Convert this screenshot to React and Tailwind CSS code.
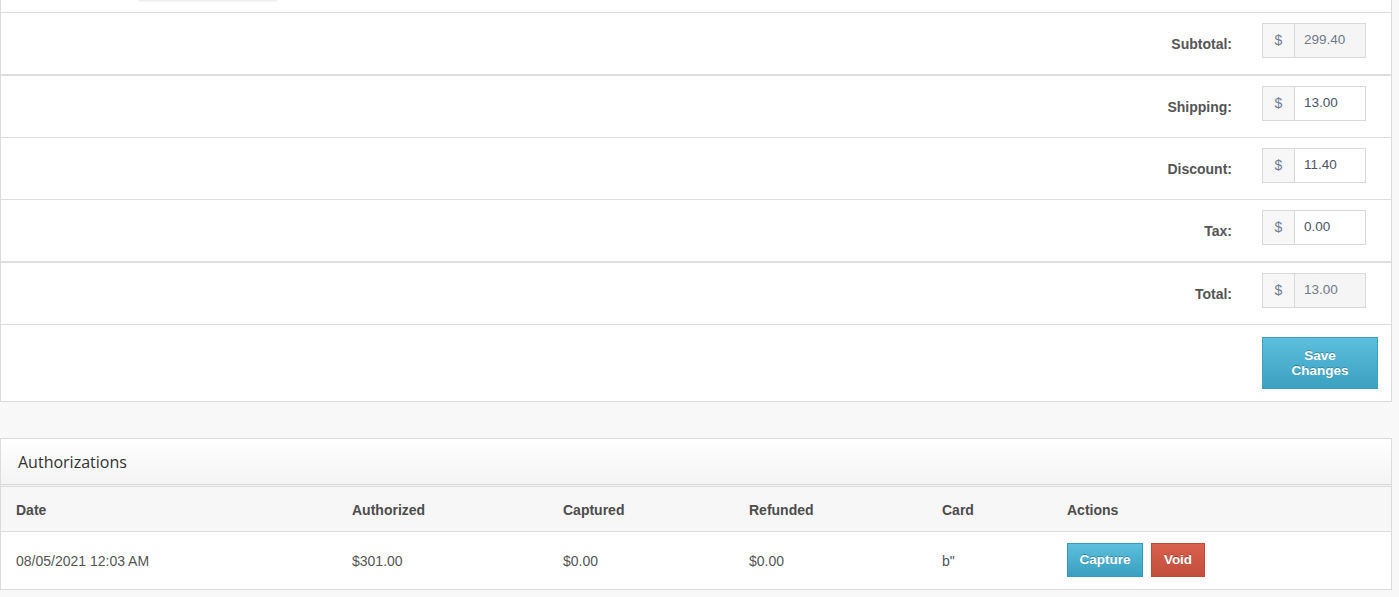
import React from 'react';

const totals = [
    { label: 'Subtotal:', value: '299.40', readOnly: true, thick: false },
    { label: 'Shipping:', value: '13.00', readOnly: false, thick: true },
    { label: 'Discount:', value: '11.40', readOnly: false, thick: false },
    { label: 'Tax:', value: '0.00', readOnly: false, thick: false },
    { label: 'Total:', value: '13.00', readOnly: true, thick: true },
];

const authorizations = [
    { date: '08/05/2021 12:03 AM', authorized: '$301.00', captured: '$0.00', refunded: '$0.00', card: 'b"' },
];

function MoneyInput({ value, readOnly }) {
    return (
        <div className="flex w-[104px] h-[35px]">
            <span className="w-[33px] shrink-0 flex items-center justify-center border border-[#d9d9d9] bg-[#f7f7f7] text-[14px] text-[#6e7d96]">
                $
            </span>
            <input
                defaultValue={value}
                readOnly={readOnly}
                className={
                    'w-[71px] border border-l-0 border-[#d9d9d9] pl-[9px] pr-2 text-[13.5px] outline-none ' +
                    (readOnly ? 'bg-[#f5f5f5] text-[#6f7b8c]' : 'bg-white text-[#4a5566]')
                }
            />
        </div>
    );
}

export default function App() {
    return (
        <div className="min-h-screen bg-[#f8f8f8] pr-[7px] font-['Liberation_Sans',Arial,sans-serif]">
            {/* Order totals */}
            <div className="bg-white border-x border-b border-[#dcdcdc]">
                <div className="h-[12px]">
                    <div className="ml-[137px] w-[139px] h-px bg-[#eeeeee] shadow-[0_1px_2px_rgba(0,0,0,0.06)]" />
                </div>

                {totals.map((row) => (
                    <div
                        key={row.label}
                        className={
                            'flex justify-end h-[62px] border-[#dedede] ' +
                            (row.thick ? 'border-t-2 h-[63px]' : 'border-t')
                        }
                    >
                        <label className="mt-[21px] leading-5 text-[14px] font-bold text-[#555]">
                            {row.label}
                        </label>
                        <div className="w-[116px] ml-[30px] mr-[13px] pt-[10px]">
                            <MoneyInput value={row.value} readOnly={row.readOnly} />
                        </div>
                    </div>
                ))}

                <div className="flex justify-end border-t border-[#dedede] pt-[12px] pb-[12px]">
                    <button className="w-[116px] mr-[13px] h-[52px] px-3 border border-[#3aa2c3] bg-gradient-to-b from-[#5bbfdd] to-[#3ca0c1] text-white text-[13.5px] font-bold leading-[15px] [text-shadow:0_-1px_0_rgba(0,0,0,0.25)]">
                        Save
                        <br />
                        Changes
                    </button>
                </div>
            </div>

            <div className="h-[36px]" />

            {/* Authorizations */}
            <div className="bg-white border border-[#dcdcdc]">
                <div className="h-[46px] flex items-center px-[17px] bg-gradient-to-b from-white to-[#f4f4f4] border-b border-[#d8d8d8]">
                    <h3 className="font-['Open_Sans',sans-serif] text-[16px] text-[#333]">Authorizations</h3>
                </div>
                <div className="h-[2px] bg-[#f4f4f4] border-b border-[#dddddd]" />

                <table className="w-full table-fixed text-[14px] text-left">
                    <colgroup>
                        <col className="w-[335px]" />
                        <col className="w-[211px]" />
                        <col className="w-[186px]" />
                        <col className="w-[193px]" />
                        <col className="w-[125px]" />
                        <col />
                    </colgroup>
                    <thead>
                        <tr className="h-[44px] bg-[#f7f7f7] text-[#4d4d4d] border-b border-[#dddddd]">
                            <th className="pl-[15px] pt-[4px] font-bold">Date</th>
                            <th className="pl-[16px] pt-[4px] font-bold">Authorized</th>
                            <th className="pl-[16px] pt-[4px] font-bold">Captured</th>
                            <th className="pl-[16px] pt-[4px] font-bold">Refunded</th>
                            <th className="pl-[16px] pt-[4px] font-bold">Card</th>
                            <th className="pl-[16px] pt-[4px] font-bold">Actions</th>
                        </tr>
                    </thead>
                    <tbody>
                        {authorizations.map((a) => (
                            <tr key={a.date} className="h-[58px] text-[#555]">
                                <td className="pl-[15px] pt-[3px]">{a.date}</td>
                                <td className="pl-[16px] pt-[3px]">{a.authorized}</td>
                                <td className="pl-[16px] pt-[3px]">{a.captured}</td>
                                <td className="pl-[16px] pt-[3px]">{a.refunded}</td>
                                <td className="pl-[16px] pt-[3px] text-[#4a5566]">{a.card}</td>
                                <td className="pl-[16px]">
                                    <div className="flex gap-[8px] text-[13.5px]">
                                        <button className="w-[76px] h-[34px] border border-[#2f9cc0] bg-gradient-to-b from-[#5bbfdd] to-[#3a9fc0] text-white font-bold [text-shadow:0_-1px_0_rgba(0,0,0,0.25)]">
                                            Capture
                                        </button>
                                        <button className="w-[54px] h-[34px] border border-[#b84a3b] bg-gradient-to-b from-[#d9604d] to-[#c24e3d] text-white font-bold [text-shadow:0_-1px_0_rgba(0,0,0,0.25)]">
                                            Void
                                        </button>
                                    </div>
                                </td>
                            </tr>
                        ))}
                    </tbody>
                </table>
            </div>
        </div>
    );
}
